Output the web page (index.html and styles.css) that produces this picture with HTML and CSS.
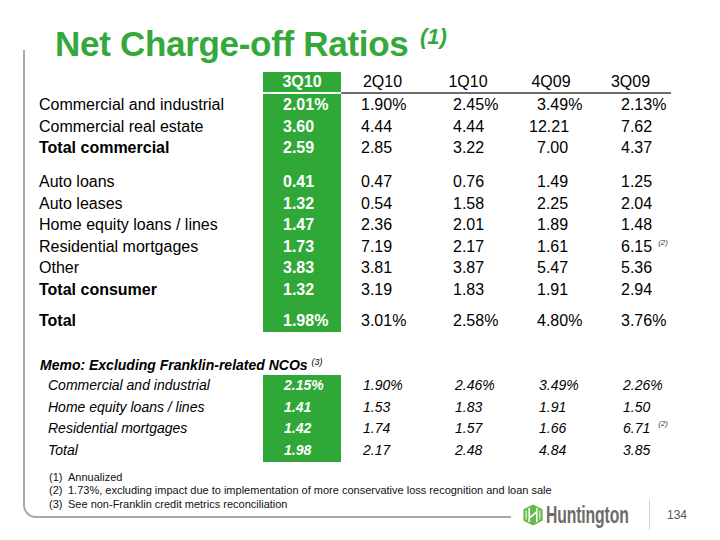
FILE: index.html
```html
<!DOCTYPE html>
<html lang="en">
<head>
<meta charset="utf-8">
<title>Net Charge-off Ratios</title>
<link rel="stylesheet" href="styles.css">
</head>
<body>
<div class="slide">
  <h1 class="title">Net Charge-off Ratios <sup class="title-note">(1)</sup></h1>
  <div class="bottom">
    <div class="frame">
      <div class="table">
        <div class="row head">
          <div class="lbl"></div>
          <div class="cur">3Q10</div>
          <div class="hd">2Q10</div>
          <div class="hd">1Q10</div>
          <div class="hd">4Q09</div>
          <div class="hd">3Q09</div>
        </div>
        <div class="row">
          <div class="lbl">Commercial and industrial</div>
          <div class="cur v1">2.01%</div>
          <div class="v2">1.90%</div><div class="v3">2.45%</div><div class="v4">3.49%</div><div class="v5">2.13%</div>
        </div>
        <div class="row">
          <div class="lbl">Commercial real estate</div>
          <div class="cur v1">3.60</div>
          <div class="v2">4.44</div><div class="v3">4.44</div><div class="v4 wide">12.21</div><div class="v5">7.62</div>
        </div>
        <div class="row">
          <div class="lbl strong">Total commercial</div>
          <div class="cur v1">2.59</div>
          <div class="v2">2.85</div><div class="v3">3.22</div><div class="v4">7.00</div><div class="v5">4.37</div>
        </div>
        <div class="row gap-a"><div></div><div class="cur"></div></div>
        <div class="row">
          <div class="lbl">Auto loans</div>
          <div class="cur v1">0.41</div>
          <div class="v2">0.47</div><div class="v3">0.76</div><div class="v4">1.49</div><div class="v5">1.25</div>
        </div>
        <div class="row">
          <div class="lbl">Auto leases</div>
          <div class="cur v1">1.32</div>
          <div class="v2">0.54</div><div class="v3">1.58</div><div class="v4">2.25</div><div class="v5">2.04</div>
        </div>
        <div class="row">
          <div class="lbl">Home equity loans / lines</div>
          <div class="cur v1">1.47</div>
          <div class="v2">2.36</div><div class="v3">2.01</div><div class="v4">1.89</div><div class="v5">1.48</div>
        </div>
        <div class="row">
          <div class="lbl">Residential mortgages</div>
          <div class="cur v1">1.73</div>
          <div class="v2">7.19</div><div class="v3">2.17</div><div class="v4">1.61</div><div class="v5">6.15<span class="fn">(2)</span></div>
        </div>
        <div class="row">
          <div class="lbl">Other</div>
          <div class="cur v1">3.83</div>
          <div class="v2">3.81</div><div class="v3">3.87</div><div class="v4">5.47</div><div class="v5">5.36</div>
        </div>
        <div class="row">
          <div class="lbl strong">Total consumer</div>
          <div class="cur v1">1.32</div>
          <div class="v2">3.19</div><div class="v3">1.83</div><div class="v4">1.91</div><div class="v5">2.94</div>
        </div>
        <div class="row gap-b"><div></div><div class="cur"></div></div>
        <div class="row">
          <div class="lbl strong">Total</div>
          <div class="cur v1">1.98%</div>
          <div class="v2">3.01%</div><div class="v3">2.58%</div><div class="v4">4.80%</div><div class="v5">3.76%</div>
        </div>
      </div>

      <div class="memo-title">Memo: Excluding Franklin-related NCOs <span class="memo-fn">(3)</span></div>
      <div class="table memo">
        <div class="row">
          <div class="lbl">Commercial and industrial</div>
          <div class="cur v1">2.15%</div>
          <div class="v2">1.90%</div><div class="v3">2.46%</div><div class="v4">3.49%</div><div class="v5">2.26%</div>
        </div>
        <div class="row">
          <div class="lbl">Home equity loans / lines</div>
          <div class="cur v1">1.41</div>
          <div class="v2">1.53</div><div class="v3">1.83</div><div class="v4">1.91</div><div class="v5">1.50</div>
        </div>
        <div class="row">
          <div class="lbl">Residential mortgages</div>
          <div class="cur v1">1.42</div>
          <div class="v2">1.74</div><div class="v3">1.57</div><div class="v4">1.66</div><div class="v5">6.71<span class="fn fn-memo">(2)</span></div>
        </div>
        <div class="row">
          <div class="lbl">Total</div>
          <div class="cur v1">1.98</div>
          <div class="v2">2.17</div><div class="v3">2.48</div><div class="v4">4.84</div><div class="v5">3.85</div>
        </div>
      </div>

      <ul class="notes">
        <li><span class="num">(1)</span><span>Annualized</span></li>
        <li><span class="num">(2)</span><span>1.73%, excluding impact due to implementation of more conservative loss recognition and loan sale</span></li>
        <li><span class="num">(3)</span><span>See non-Franklin credit metrics reconciliation</span></li>
      </ul>
    </div>

    <div class="footer">
      <svg class="logo-mark" width="20" height="22" viewBox="0 0 20 22" aria-hidden="true">
        <path d="M10 0.5 L19 5 Q19.6 5.4 19.6 6 L19.6 16 Q19.6 16.6 19 17 L10 21.5 L1 17 Q0.4 16.6 0.4 16 L0.4 6 Q0.4 5.4 1 5 Z" fill="#66bb4a"/>
        <path d="M6.2 4 L6.2 18 M13.8 4 L13.8 18 M6.2 14.2 L13.8 7.8" stroke="#ffffff" stroke-width="1.6" fill="none"/>
        <path d="M3.2 6.5 L3.2 15.5 M16.8 6.5 L16.8 15.5" stroke="#ffffff" stroke-width="1" fill="none"/>
      </svg>
      <span class="logo-text">Huntington</span>
      <span class="sep"></span>
      <span class="page">134</span>
    </div>
  </div>
</div>
</body>
</html>
```

FILE: styles.css
```css
html, body {
  margin: 0;
  padding: 0;
  background: #ffffff;
}

body {
  width: 720px;
  height: 540px;
  overflow: hidden;
  font-family: "Liberation Sans", Arial, sans-serif;
  color: #000000;
}

.slide {
  padding-top: 24px;
}

.title {
  margin: 0 0 -14px 55px;
  font-size: 35px;
  line-height: 40px;
  font-weight: 700;
  letter-spacing: -0.3px;
  color: #34a83a;
  white-space: nowrap;
}

.title-note {
  font-size: 22px;
  font-style: italic;
  line-height: 0;
  vertical-align: 12px;
  letter-spacing: 0;
  margin-left: 2px;
}

.bottom {
  display: flex;
  align-items: flex-end;
}

.frame {
  box-sizing: border-box;
  margin-left: 23px;
  width: 488px;
  height: 468px;
  flex: none;
  border-left: 2px solid #a9a9a9;
  border-bottom: 2px solid #a9a9a9;
  border-bottom-left-radius: 13px;
  padding: 22px 0 0 14px;
}

.table {
  width: 632px;
}

.row {
  display: grid;
  grid-template-columns: 224px 78px 83px 88px 78px 81px;
  height: 21.5px;
  line-height: 21.5px;
  font-size: 16px;
  white-space: nowrap;
}

.row.head {
  height: 22px;
  line-height: 20px;
}

.row.head > div {
  text-align: center;
  border-bottom: 2px solid #6e6e6e;
}

.row.head > .lbl {
  border-bottom: 0;
}

.row.head > .cur {
  border-bottom-color: #ffffff;
  font-weight: 700;
}

.row.gap-a {
  height: 12.75px;
}

.row.gap-b {
  height: 10px;
}

.cur {
  background: #30a838;
  color: #ffffff;
  font-weight: 700;
}

.strong {
  font-weight: 700;
}

.v1 { padding-left: 20px; }
.v2 { padding-left: 20px; }
.v3 { padding-left: 29px; }
.v4 { padding-left: 25px; }
.v4.wide { padding-left: 17px; }
.v5 { padding-left: 31px; }

.fn {
  font-size: 8px;
  font-style: italic;
  color: #333333;
  vertical-align: 7px;
  line-height: 0;
  margin-left: 6px;
}

.memo-title {
  margin-top: 24px;
  height: 19px;
  line-height: 19px;
  font-size: 14px;
  font-weight: 700;
  font-style: italic;
  padding-left: 1px;
  white-space: nowrap;
}

.memo-fn {
  font-size: 9px;
  vertical-align: 5px;
  line-height: 0;
  font-weight: 400;
}

.memo .row {
  height: 21.75px;
  line-height: 21.75px;
  font-size: 14px;
  font-style: italic;
}

.memo .lbl {
  padding-left: 9px;
}

.memo .v1 { padding-left: 21px; }
.memo .v2 { padding-left: 22px; }
.memo .v3 { padding-left: 31px; }
.memo .v4 { padding-left: 27px; }
.memo .v5 { padding-left: 33px; }

.memo .fn-memo {
  margin-left: 8px;
}

.notes {
  list-style: none;
  margin: 9px 0 0 10px;
  padding: 0;
  font-size: 11px;
  line-height: 13.5px;
  color: #111111;
  white-space: nowrap;
}

.notes li {
  display: flex;
}

.notes .num {
  width: 19px;
  flex: none;
}

.footer {
  display: flex;
  align-items: center;
  height: 30px;
  margin-bottom: -12px;
}

.logo-mark {
  display: block;
  margin-left: 12px;
  flex: none;
}

.logo-text {
  display: block;
  width: 86px;
  margin-left: 3px;
  font-size: 24px;
  line-height: 24px;
  font-weight: 700;
  color: #6d6c6a;
  white-space: nowrap;
  transform: scaleX(0.656);
  transform-origin: left center;
  letter-spacing: -0.2px;
}

.sep {
  display: block;
  width: 1px;
  height: 30px;
  margin-left: 17px;
  background: #d2d2d2;
}

.page {
  margin-left: 17px;
  font-size: 12px;
  color: #555555;
}
```
